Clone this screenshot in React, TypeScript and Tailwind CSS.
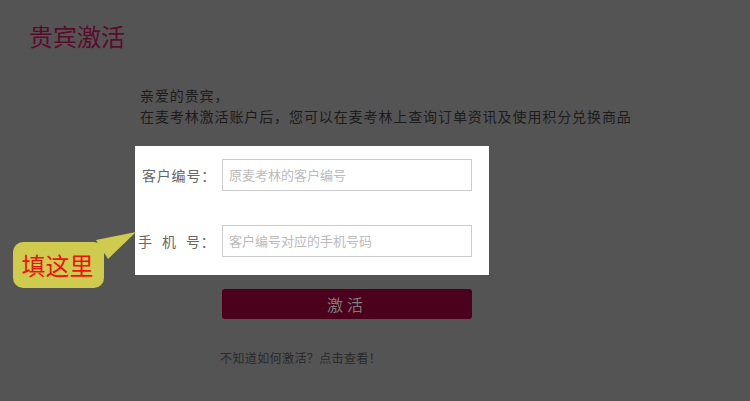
import React from "react";

export default function App() {
  const font = { fontFamily: '"Noto Sans CJK SC", "Noto Sans", sans-serif' };
  return (
    <div
      className="relative w-[750px] h-[401px] bg-[#545454] overflow-hidden"
      style={font}
    >
      <div className="pt-[21px] pl-[29px] text-[24px] leading-[30px] text-[#5c0a29]">
        贵宾激活
      </div>
      <div className="ml-[140px] mt-[34px] text-[14px] leading-[21px] text-[#1c1c1c] tracking-[0.9px]">
        <div>亲爱的贵宾，</div>
        <div>在麦考林激活账户后，您可以在麦考林上查询订单资讯及使用积分兑换商品</div>
      </div>
      <div className="ml-[135px] mt-[19px] w-[354px] h-[129px] bg-white pt-[13px] flex flex-col gap-[34px]">
        <div className="flex items-center">
          <div className="w-[87px] pl-[7px] text-[14px] text-[#666] tracking-[0.8px]">客户编号：</div>
          <div className="w-[250px] h-[32px] border border-[#ccc] flex items-center pl-[6px] text-[13px] text-[#bbb]">
            原麦考林的客户编号
          </div>
        </div>
        <div className="flex items-center">
          <div className="w-[87px] pl-[3px] text-[14px] text-[#666] flex">
            <span className="mr-[10px]">手</span>
            <span className="mr-[10px]">机</span>
            <span className="tracking-[0.8px]">号：</span>
          </div>
          <div className="w-[250px] h-[32px] border border-[#ccc] flex items-center pl-[6px] text-[13px] text-[#bbb]">
            客户编号对应的手机号码
          </div>
        </div>
      </div>
      <div className="ml-[222px] mt-[14px] w-[250px] h-[30px] rounded-[3px] bg-[#4b001b] flex items-center justify-center text-[16px] text-[#7d7d7d] tracking-[4px]">
        激活
      </div>
      <div className="ml-[220px] mt-[31px] text-[12px] leading-[16px] text-[#2a2a2a] tracking-[0.4px]">
        不知道如何激活？点击查看！
      </div>

      <svg
        className="absolute left-0 top-0"
        width="750"
        height="401"
        viewBox="0 0 750 401"
      >
        <polygon points="96,240 136,232 108,259" fill="#cfcb4f" />
      </svg>
      <div className="absolute left-[13px] top-[242px] w-[91px] h-[46px] rounded-[10px] bg-[#cfcb4f] flex items-center justify-center text-[24px] leading-[30px] text-[#f01010] pr-[2px]">
        填这里
      </div>
    </div>
  );
}
